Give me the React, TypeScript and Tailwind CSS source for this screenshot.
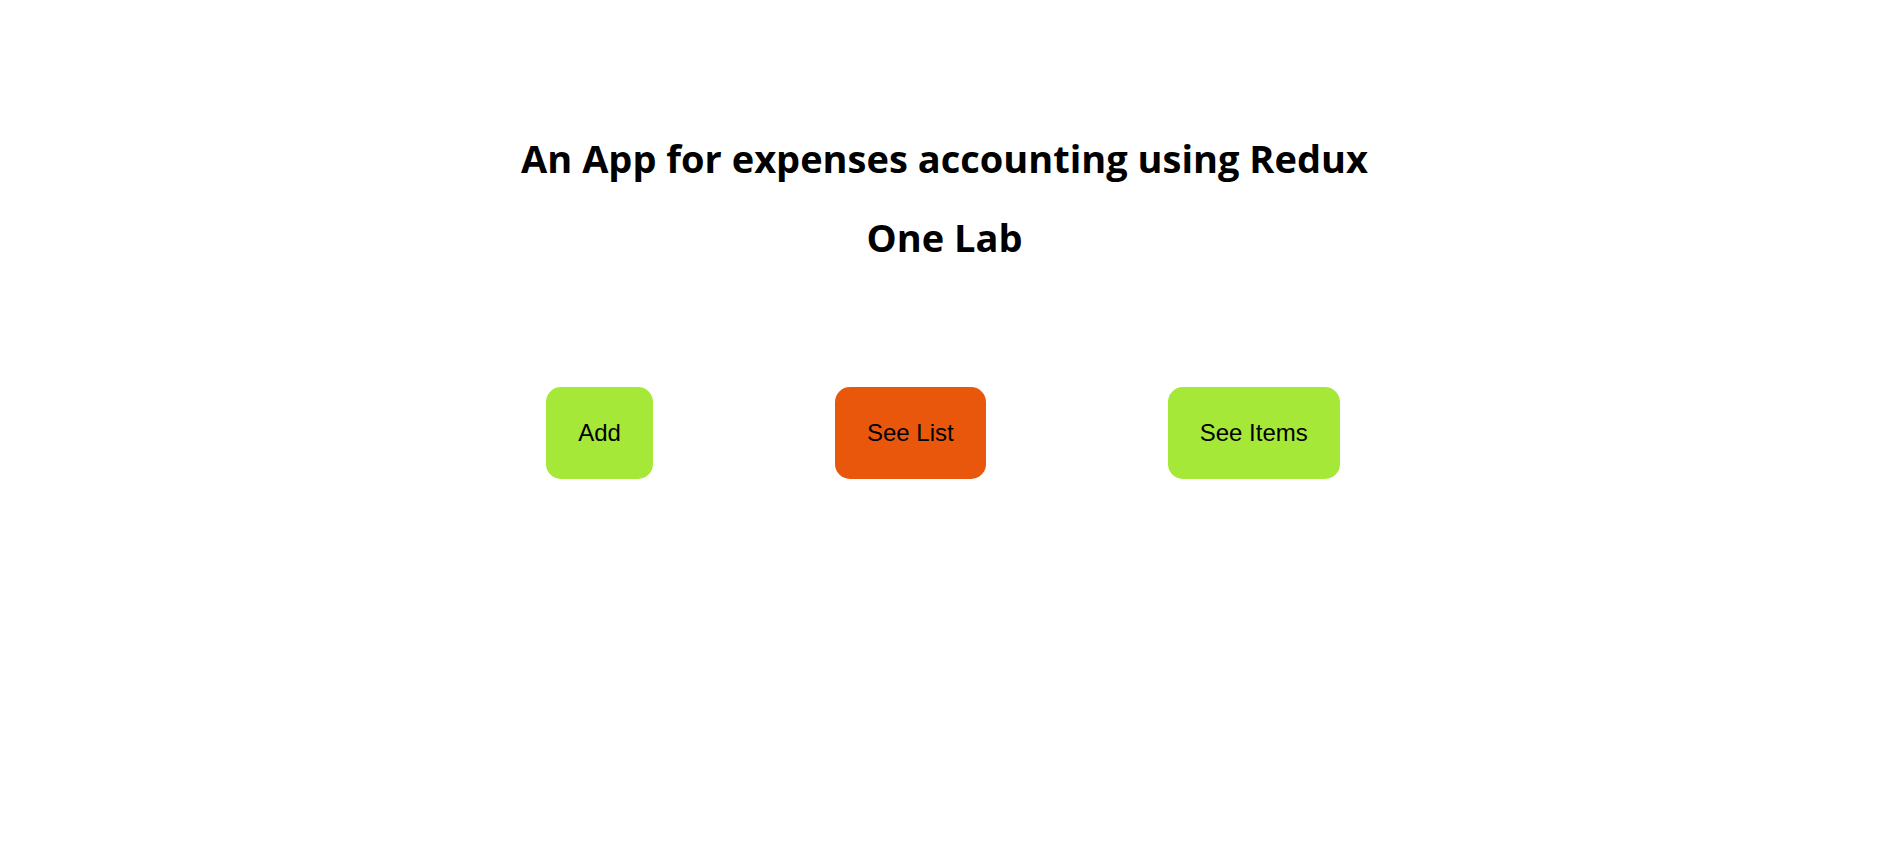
import React from 'react';

const buttons = [
  { label: 'Add', color: 'bg-[#a6e837]' },
  { label: 'See List', color: 'bg-[#e9570c]' },
  { label: 'See Items', color: 'bg-[#a6e837]' },
];

export default function App() {
  return (
    <div className="min-h-screen bg-white text-black">
      {/* Header */}
      <div className="pt-[136px] flex flex-col items-center gap-[35px] font-['Open_Sans',sans-serif] font-bold text-[38px] leading-[44px]">
        <h1>An App for expenses accounting using Redux</h1>
        <h2>One Lab</h2>
      </div>

      {/* Actions */}
      <div className="mt-[128px] flex justify-center gap-[182px] pr-[3px]">
        {buttons.map((b) => (
          <button
            key={b.label}
            className={`${b.color} p-8 rounded-[15px] text-2xl leading-[normal] font-['Liberation_Sans',Arial,sans-serif] text-black`}
          >
            {b.label}
          </button>
        ))}
      </div>
    </div>
  );
}
